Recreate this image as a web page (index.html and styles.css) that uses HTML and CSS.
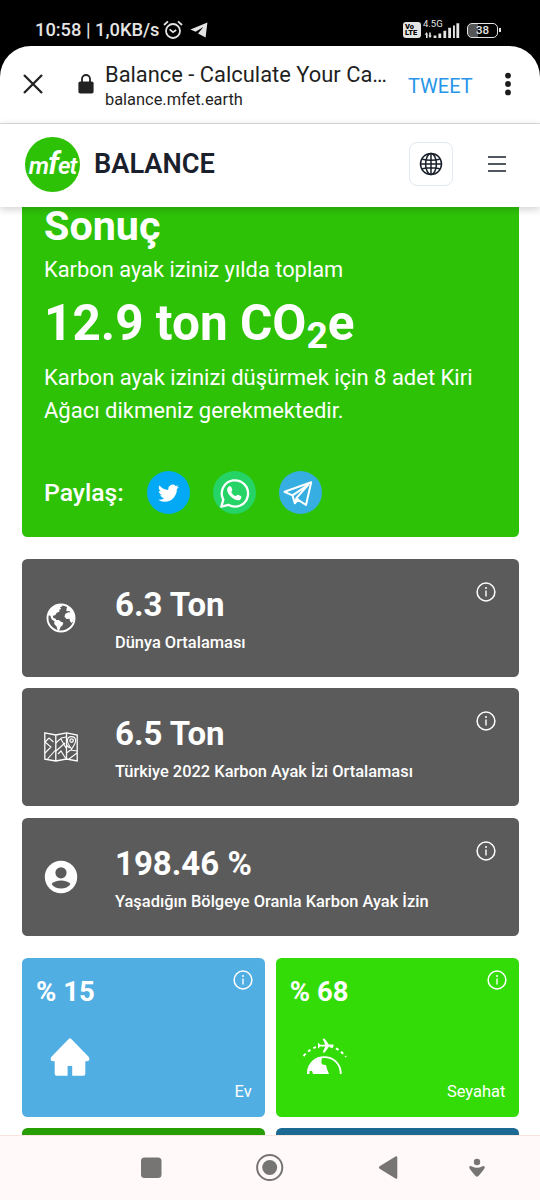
FILE: index.html
```html
<!DOCTYPE html>
<html lang="tr">
<head>
<meta charset="utf-8">
<title>Balance - Calculate Your Carbon Footprint</title>
<link rel="stylesheet" href="styles.css">
</head>
<body>
<svg class="defs" width="0" height="0">
  <symbol id="info" viewBox="0 0 20 20">
    <circle cx="10" cy="10" r="8.9" fill="none" stroke="#fff" stroke-width="1.5"/>
    <circle cx="10" cy="5.9" r="1" fill="#fff"/>
    <path d="M10 8.6v5.8" stroke="#fff" stroke-width="1.4"/>
  </symbol>
</svg>
<div class="phone">
  <div class="status">
    <span class="status-time">10:58 | 1,0KB/s</span>
    <svg class="alarm" width="20" height="20" viewBox="0 0 20 20" fill="none" stroke="#e4e4e4" stroke-width="1.8">
      <circle cx="10" cy="11" r="7"/><path d="M1 5l4-3.6M19 5l-4-3.6M6.6 9.4l3.4 2.8 3.2-2.2"/>
    </svg>
    <svg class="plane" width="18" height="16" viewBox="0 0 18 16" fill="#e4e4e4"><path d="M.4 7.6L17.4.4 15.6 15.4 8 11.6 13.4 5 5.6 9.8z"/></svg>
    <span class="volte"><b>Vo</b><b>LTE</b></span>
    <span class="network">
      <span class="network-name">4.5G</span>
      <svg width="36" height="17" viewBox="0 0 36 17" fill="#e4e4e4"><path d="M2 11.400h1.600V16H2zM.6 12.800L2.800 10l1 2.800zM5.200 10.400h1.600V15H5.200zM4.400 13.600h3.400L6 16.200zM9.600 13.600h2.800V16H9.600zM14.400 11.400h2.800V16h-2.800zM19.400 8.800h2.800V16h-2.800zM24.200 5.800H27V16h-2.800zM29 3.600h1.900V16H29zM32.400 1.200h2.800V16h-2.800z"/></svg>
    </span>
    <span class="battery">38</span>
  </div>

  <div class="sheet">
    <div class="tabbar">
      <svg class="close" width="20" height="20" viewBox="0 0 20 20" stroke="#222" stroke-width="2.3"><path d="M1 1l18 18M19 1L1 19"/></svg>
      <svg class="lock" width="16" height="20" viewBox="0 0 16 20"><path d="M4 8V5a4 4 0 0 1 8 0v3" fill="none" stroke="#222" stroke-width="1.8"/><rect x=".4" y="7.4" width="15.2" height="12.2" rx="1.8" fill="#222"/></svg>
      <div class="page-info">
        <div class="page-title">Balance - Calculate Your Ca…</div>
        <div class="page-url">balance.mfet.earth</div>
      </div>
      <span class="tweet">TWEET</span>
      <svg class="dots" width="6" height="24" viewBox="0 0 6 24" fill="#1c1c1c"><circle cx="3" cy="3.6" r="2.9"/><circle cx="3" cy="12" r="2.9"/><circle cx="3" cy="20.4" r="2.9"/></svg>
    </div>

    <header class="site-header">
      <span class="logo"><i>m<em>f</em>et</i></span>
      <span class="brand">BALANCE</span>
      <span class="lang">
        <svg width="24" height="24" viewBox="0 0 24 24" fill="none" stroke="#1a202c" stroke-width="1.5"><circle cx="12" cy="12" r="10.500"/><ellipse cx="12" cy="12" rx="5.400" ry="10.500"/><path d="M12 1.500v21M1.500 12h21M3.200 7.200q8.800 2 17.600 0M3.200 16.800q8.800-2 17.600 0"/></svg>
      </span>
      <svg class="menu" width="18" height="16" viewBox="0 0 18 16" stroke="#1a202c" stroke-width="1.700"><path d="M0 1h18M0 8h18M0 15h18"/></svg>
    </header>

    <main class="content">
      <section class="result">
        <h1>Sonuç</h1>
        <p class="lead">Karbon ayak iziniz yılda toplam</p>
        <p class="total">12.9 ton CO<sub>2</sub>e</p>
        <p class="advice">Karbon ayak izinizi düşürmek için 8 adet Kiri Ağacı dikmeniz gerekmektedir.</p>
        <div class="share">
          <span class="share-label">Paylaş:</span>
          <span class="social twitter"><svg width="21" height="21" viewBox="0 0 16 16" fill="#fff"><path d="M5.026 15c6.038 0 9.341-5.003 9.341-9.334 0-.14 0-.282-.006-.422A6.685 6.685 0 0 0 16 3.542a6.658 6.658 0 0 1-1.889.518 3.301 3.301 0 0 0 1.447-1.817 6.533 6.533 0 0 1-2.087.793A3.286 3.286 0 0 0 7.875 6.030a9.325 9.325 0 0 1-6.767-3.429 3.289 3.289 0 0 0 1.018 4.382A3.323 3.323 0 0 1 .64 6.575v.045a3.288 3.288 0 0 0 2.632 3.218 3.203 3.203 0 0 1-.865.115 3.230 3.230 0 0 1-.614-.057 3.283 3.283 0 0 0 3.067 2.277A6.588 6.588 0 0 1 .78 13.580a6.320 6.320 0 0 1-.78-.045A9.344 9.344 0 0 0 5.026 15z"/></svg></span>
          <span class="social whatsapp"><svg width="30" height="30" viewBox="0 0 29 29"><path d="M1.300 27.700l1.900-6.800A12.700 12.700 0 1 1 8 25.900z" fill="none" stroke="#fff" stroke-width="2.200" stroke-linejoin="round"/><path d="M8.500 8.300c1-.7 2.100-.3 2.500.7l.9 2.400c.3.800-.9 1.500-1 2.200.6 1.800 2.300 3.400 4.200 3.900.8-.1 1.400-1.500 2.200-1.300l2.800 1.200c1 .6.600 2.500-.4 3.300-1.900 1.500-4.400.8-6.900-.8-2.300-1.500-4.700-3.900-5.600-6.500-.7-2.200-.3-4 1.300-5.100z" fill="#fff"/></svg></span>
          <span class="social telegram"><svg width="43" height="43" viewBox="0 0 43 43" fill="none" stroke="#fff" stroke-width="2" stroke-linejoin="round"><path d="M5.500 20.800L32.200 11.300 27 34l-7.800-5.100-3.400 3.400-2.300-7.900zM13.500 24.400L29.200 13.800 17.600 26.900l1.600 2M17.600 26.900l-1.800 5.400"/></svg></span>
        </div>
      </section>

      <section class="stats">
        <article class="stat">
          <span class="stat-icon"><svg width="30" height="30" viewBox="0 0 30 30"><circle cx="15" cy="15" r="13.500" fill="none" stroke="#fff" stroke-width="1.900"/><path fill="#fff" d="M1.500 12Q3.500 4.500 10 2l5.500-.5.700 2-2.200.8 1.200 1.600-2 .9.400 1.600-2.800 1.300-1.700 2.500-2.200.6.400 2.300 2.400.6.500 1.300h2.600l2.200 1.800 2.400 1-1 2.800-1.700 1.200-1.300 3.200-1.500 1.200-1.300-4.700-2.400-2.500.2-2.800-2.800-2-1.300-3.400zM20.500 5.800l1-2.700q4.500 3 6.200 7l.8 4.900-1.500 3.600-1.700 1.500-1.300-2-.5-2.300-3 .2-2-2.300.7-2.600 2.500-1.600 2.800-.3-1.400-1.300-2.600.4z"/></svg></span>
          <div class="stat-body"><div class="stat-value">6.3 Ton</div><div class="stat-name">Dünya Ortalaması</div></div>
          <svg class="info" width="20" height="20"><use href="#info"/></svg>
        </article>
        <article class="stat">
          <span class="stat-icon"><svg width="34" height="30" viewBox="0 0 34 30" fill="none" stroke="#fff" stroke-width="1.300"><path d="M.8.9L11.800 3 22.500.9 33.200 3v26L22.500 27l-10.700 2L.8 27.200zM11.800 3v26M22.500.9V27"/><path stroke-width="1.100" d="M1 10l4-4 4.500 4M1 21l6-6-6-5M3.500 27L11.500 18M11.800 11l5.500-5L22 5M17 7l5 9M12 19l9-8M14 22l3-3 5 8M22.500 21l4-3 6.500 1M25 27l8-6M22.500 13l3 3M27.600 17c-3-4-4.200-6-4.200-8.300 0-5.500 8.200-5.500 8.200 0 0 2.300-1.200 4.300-4 8.300z"/><circle cx="27.600" cy="8.600" r="1.700"/></svg></span>
          <div class="stat-body"><div class="stat-value">6.5 Ton</div><div class="stat-name">Türkiye 2022 Karbon Ayak İzi Ortalaması</div></div>
          <svg class="info" width="20" height="20"><use href="#info"/></svg>
        </article>
        <article class="stat">
          <span class="stat-icon"><svg width="34" height="34" viewBox="0 0 34 34"><circle cx="17" cy="17" r="16.200" fill="#fff"/><circle cx="17" cy="12.800" r="5.600" fill="#5b5b5b"/><path d="M7.500 24c3.500-4.800 15.500-4.800 19 0-4 6-15 6-19 0z" fill="#5b5b5b"/></svg></span>
          <div class="stat-body"><div class="stat-value">198.46 %</div><div class="stat-name">Yaşadığın Bölgeye Oranla Karbon Ayak İzin</div></div>
          <svg class="info" width="20" height="20"><use href="#info"/></svg>
        </article>
      </section>

      <section class="tiles">
        <article class="tile home">
          <div class="tile-head"><span class="tile-value">% 15</span><svg width="20" height="20"><use href="#info"/></svg></div>
          <svg class="tile-icon" width="40" height="38" viewBox="0 0 40 38" fill="#fff"><path d="M18.700.9q1.300-1.100 2.600 0L38.800 19q1.800 4-2 4.200h-1.500V36q0 1.800-1.800 1.800H22.200V28h-4.600v9.800H6.500Q4.700 37.800 4.700 36V23.200H3.200Q-.6 23 1.200 19z"/></svg>
          <div class="tile-name">Ev</div>
        </article>
        <article class="tile travel">
          <div class="tile-head"><span class="tile-value">% 68</span><svg width="20" height="20"><use href="#info"/></svg></div>
          <svg class="tile-icon" width="46" height="38" viewBox="0 0 46 38"><path d="M1.500 18Q9 9.500 17 8.500M28 8.500Q37 10 44 19" fill="none" stroke="#fff" stroke-width="2" stroke-dasharray="3 3.200"/><path fill="#fff" d="M16 7.700V4.600l2.200 2.200h5L20.600.8h2.100l4.200 5.800h4.200q1.600 1.100 0 2.200h-4.200l-4.200 5.800h-2.100l2.600-6h-5L16 10.800zM6 36q-.5-10 7-15 3-2 7-2l-.7 5.500 1 2 3.700.5 1 4 2 5H11l-1-3H7.500v3z"/><path d="M5.800 36c0-22.500 33-22.500 33 0" fill="none" stroke="#fff" stroke-width="1.800"/></svg>
          <div class="tile-name">Seyahat</div>
        </article>
        <article class="tile green"></article>
        <article class="tile blue"></article>
      </section>
    </main>
  </div>

  <nav class="system-nav">
    <svg width="540" height="64" viewBox="0 0 540 64" fill="#777573"><rect x="141" y="21.500" width="20.500" height="20.500" rx="3.500"/><circle cx="269.700" cy="31.500" r="12.600" fill="none" stroke="#777573" stroke-width="2"/><circle cx="269.700" cy="31.500" r="7.500"/><path d="M379.600 30.300L395.500 20.400q1.800-.8 1.800 1V41.600q0 1.800-1.800 1L379.600 32.700q-1.600-1.200 0-2.400z"/><circle cx="477" cy="26" r="3.200"/><path d="M469.200 31.200q.4-2 2.800-.8 5 2.600 10 0 2.400-1.200 2.800.8 0 1.800-6.400 8.700-1.400 1.600-2.800 0-6.400-6.900-6.400-8.700z"/></svg>
  </nav>
</div>
</body>
</html>
```
FILE: styles.css
```css
* { box-sizing: border-box; }
body { margin: 0; background: #000; font-family: Roboto, "Liberation Sans", sans-serif; }
h1, p { margin: 0; }
svg { display: block; flex: none; }
.defs { position: absolute; }

.phone { width: 540px; height: 1200px; display: flex; flex-direction: column; overflow: hidden; }

.status { height: 46px; flex: none; display: flex; align-items: center; padding: 14px 42px 0 35px; color: #e4e4e4; white-space: nowrap; }
.status-time { font-size: 18.300px; font-weight: 500; line-height: 24px; width: 125px; }
.alarm { margin-left: 3px; }
.plane { margin-left: 7px; margin-right: auto; }
.volte { width: 18px; height: 16px; border-radius: 3px; background: #e4e4e4; color: #000; display: flex; flex-direction: column; justify-content: center; padding-left: 2px; font-size: 7.500px; line-height: 6.500px; }
.volte b { font-weight: 900; }
.network { position: relative; margin-left: 2px; margin-right: 7px; }
.network-name { position: absolute; left: 0; top: -4px; font-size: 9.500px; line-height: 11px; }
.network svg { margin-left: 1px; }
.battery { position: relative; width: 31px; height: 15px; border: 1.600px solid #e4e4e4; border-radius: 5px; font-size: 11.500px; line-height: 13px; font-weight: 500; text-align: center; background: linear-gradient(90deg, #555 35%, #000 35%); }
.battery::after { content: ""; position: absolute; right: -4px; top: 4px; width: 2px; height: 4px; background: #e4e4e4; }

.sheet { flex: 1; min-height: 0; display: flex; flex-direction: column; background: #fff; border-radius: 31px 31px 0 0; overflow: hidden; }
.tabbar { height: 78px; flex: none; display: flex; align-items: center; padding: 0 29px 1px 23px; border-bottom: 1px solid #dedede; color: #1f1f1f; }
.lock { margin-left: 35px; }
.page-info { margin-left: 11px; margin-top: 4px; width: 290px; white-space: nowrap; }
.page-title { font-size: 21.900px; line-height: 28px; }
.page-url { font-size: 16.400px; line-height: 22px; }
.tweet { margin-left: 13px; margin-top: 4px; font-size: 20px; color: #2795e9; }
.dots { margin-left: auto; }

.site-header { height: 83px; flex: none; display: flex; align-items: center; padding: 0 34px 3px 25px; background: #fff; box-shadow: 0 2px 8px rgba(0,0,0,.2); position: relative; z-index: 1; }
.logo { width: 55px; height: 55px; border-radius: 50%; background: #2ec207; color: #fff; display: flex; align-items: center; justify-content: center; font-size: 24px; line-height: 30px; font-weight: 600; letter-spacing: -1px; }
.logo em { font-size: 32px; }
.brand { margin-left: 14px; font-size: 27.200px; font-weight: 600; color: #1a202c; }
.lang { margin-left: auto; width: 44px; height: 44px; border: 1px solid #e2e8f0; border-radius: 8px; display: flex; align-items: center; justify-content: center; }
.menu { margin-left: 35px; }

.content { flex: 1; min-height: 0; overflow: hidden; padding: 0 21.500px 0 22px; }
.result { height: 330px; background: #2ec207; border-radius: 0 0 5.500px 5.500px; color: #fff; padding: 0 22px; }
.result h1 { font-size: 41.250px; line-height: 38px; padding-bottom: 5px; font-weight: 700; }
.lead { padding-top: 3px; font-size: 21.850px; line-height: 33px; }
.total { font-size: 49.500px; line-height: 74px; height: 75px; font-weight: 700; }
.total sub { font-size: 75%; line-height: 0; vertical-align: baseline; position: relative; bottom: -.22em; }
.advice { font-size: 22px; line-height: 33px; }
.share { display: flex; align-items: center; height: 43px; margin-top: 44px; }
.share-label { font-size: 24.750px; font-weight: 500; width: 103px; }
.social { width: 43px; height: 43px; border-radius: 50%; margin-right: 23px; display: flex; align-items: center; justify-content: center; }
.twitter { background: #03a9f4; }
.whatsapp { background: #25d366; }
.telegram { background: #37aee2; }

.stats { display: grid; gap: 11.200px; margin-top: 22.300px; }
.stat { height: 118px; border-radius: 5.500px; background: #5b5b5b; color: #fff; display: flex; align-items: center; padding: 0 23px 0 21px; }
.stat-icon { width: 35px; display: flex; justify-content: center; }
.stat-body { flex: 1; padding-left: 37px; white-space: nowrap; }
.stat-value { font-size: 33px; line-height: 48px; font-weight: 700; }
.stat-name { font-size: 16.430px; line-height: 25px; margin-top: 1px; font-weight: 500; }
.info { align-self: flex-start; margin-top: 23px; }

.tiles { display: grid; grid-template-columns: 1fr 1fr; gap: 11px; margin-top: 22px; }
.tile { height: 159.500px; border-radius: 5.500px; color: #fff; padding: 12px 12px 0 14px; }
.tile-head { display: flex; justify-content: space-between; height: 68px; }
.tile-value { font-size: 27.500px; line-height: 44px; font-weight: 700; }
.tile-icon { margin-left: 14px; }
.travel .tile-icon { margin-left: 12px; }
.tile-name { text-align: right; font-size: 16.500px; line-height: 24px; margin-top: 4px; padding-right: 1px; }
.home { background: #50aee3; }
.travel { background: #33dc06; }
.green { background: #289e05; }
.blue { background: #1c6993; }

.system-nav { height: 65px; flex: none; background: #fffaf9; border-top: 1px solid #f5e4e0; }
```
